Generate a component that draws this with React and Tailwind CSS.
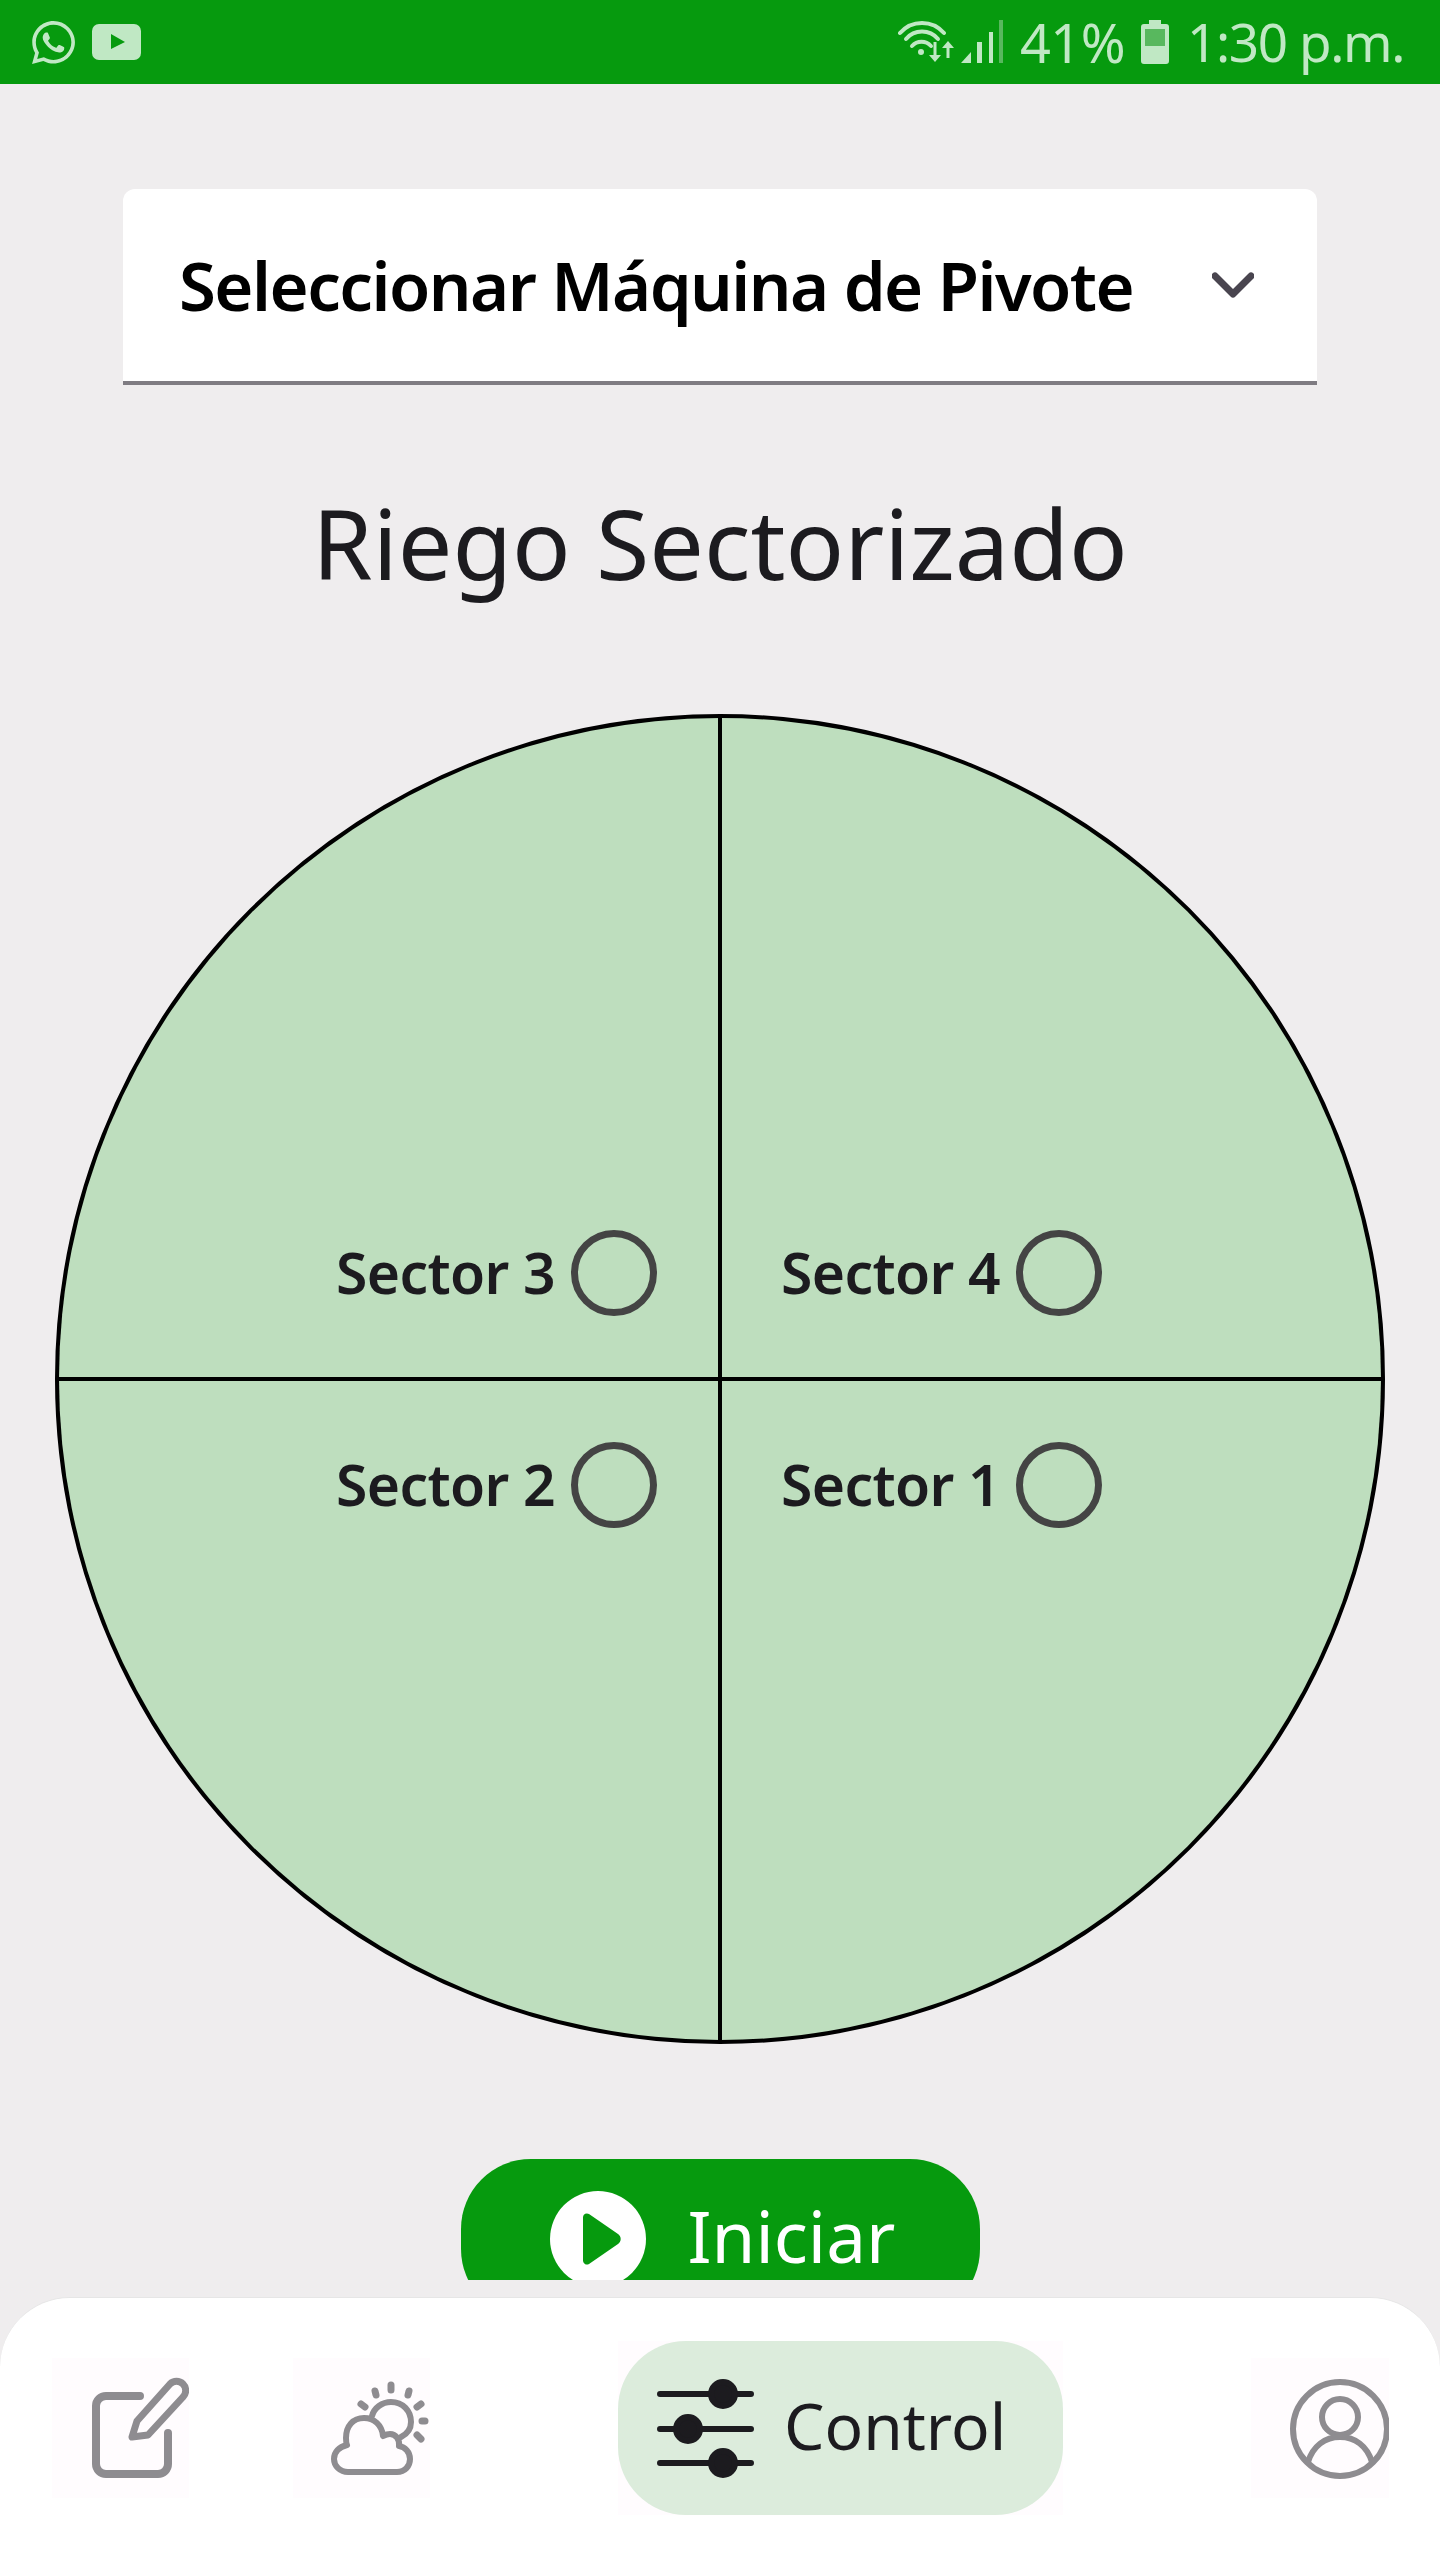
import React from "react";
import { FaWhatsapp } from "react-icons/fa";

const font = { fontFamily: '"Noto Sans", sans-serif' };

function Sector({ label, left, top }) {
  return (
    <div className={`flex bg-[#bedebe] ${left ? "justify-end pr-[61px]" : "justify-start pl-[59px]"} ${top ? "items-end pb-[60px]" : "items-start pt-[60px]"}`}>
      <div className="flex items-center">
        <span className="w-[222px] whitespace-nowrap text-[57px] leading-[86px] font-[560] tracking-[-0.6px] text-[#1c1b1f] mb-[2px]">{label}</span>
        <span className="ml-[13px] w-[86px] h-[86px] rounded-full border-[7px] border-[#444444]" />
      </div>
    </div>
  );
}

function StatusBar() {
  return (
    <div className="h-[84px] bg-[#069a0e] flex items-center justify-between pl-[29px] pr-[36px] text-[#c0e8c4]">
      <div className="flex items-center">
        <FaWhatsapp className="w-[49px] h-[49px]" />
        <svg className="ml-[14px]" width="49" height="36" viewBox="0 0 49 36">
          <rect width="49" height="36" rx="7" fill="#c0e8c4" />
          <path d="M19 10 L33 18 L19 25 Z" fill="#069a0e" />
        </svg>
      </div>
      <div className="flex items-center">
        <svg width="108" height="46" viewBox="0 0 108 46" fill="none" stroke="#c0e8c4">
          <path d="M2 14 A29 29 0 0 1 46 14" strokeWidth="4" strokeLinecap="round" />
          <path d="M8 20 A21 21 0 0 1 40 20" strokeWidth="4" strokeLinecap="round" />
          <path d="M14 27 A13 13 0 0 1 33 27" strokeWidth="4" strokeLinecap="round" />
          <circle cx="23" cy="33" r="3" fill="#c0e8c4" stroke="none" />
          <path d="M37 23 V39" strokeWidth="3" />
          <path d="M31 36 L37 43 L43 36 Z" fill="#c0e8c4" stroke="none" />
          <path d="M50 27 V39" strokeWidth="3" />
          <path d="M44 29 L50 22 L56 29 Z" fill="#c0e8c4" stroke="none" />
          <path d="M63 44 L73 33 V44 Z" fill="#c0e8c4" stroke="none" />
          <rect x="79" y="23" width="5" height="21" fill="#c0e8c4" stroke="none" />
          <rect x="91" y="13" width="4" height="31" fill="#c0e8c4" stroke="none" />
          <rect x="101" y="1" width="4" height="43" fill="#58b85e" stroke="none" />
        </svg>
        <span className="ml-[14px] text-[54px] leading-[60px] tracking-[-0.5px]">41%</span>
        <svg className="ml-[16px]" width="28" height="44" viewBox="0 0 28 44">
          <path d="M8 0 H20 V4 H25 a3 3 0 0 1 3 3 V41 a3 3 0 0 1 -3 3 H3 a3 3 0 0 1 -3 -3 V7 a3 3 0 0 1 3 -3 H8 Z" fill="#c0e8c4" />
          <rect x="4" y="9" width="20" height="17" fill="#58b85e" />
        </svg>
        <span className="ml-[18px] text-[53px] leading-[60px] tracking-[-1.4px] whitespace-nowrap">1:30 p.m.</span>
      </div>
    </div>
  );
}

export default function App() {
  return (
    <div className="w-[1440px] h-[2560px] bg-[#efedee] flex flex-col overflow-hidden" style={font}>
      <StatusBar />
      <main className="h-[2196px] overflow-hidden flex flex-col items-center">
        <div className="mt-[105px] w-[1194px] h-[196px] shrink-0 bg-white rounded-t-[12px] border-b-[4px] border-[#7f7c82] flex items-center justify-between pl-[56px] pr-[63px]">
          <span className="text-[67px] leading-[90px] font-[560] tracking-[-1.5px] text-black whitespace-nowrap">Seleccionar Máquina de Pivote</span>
          <svg width="42" height="26" viewBox="0 0 42 26" fill="none" stroke="#49454f" strokeWidth="7" strokeLinecap="round" strokeLinejoin="round">
            <path d="M3 4 L21 22 L39 4" />
          </svg>
        </div>
        <h1 className="mt-[97px] h-[120px] shrink-0 text-[97px] leading-[120px] font-normal text-[#1c1b1f] whitespace-nowrap">Riego Sectorizado</h1>
        <div className="mt-[112px] w-[1330px] h-[1330px] shrink-0 rounded-full border-[4px] border-black overflow-hidden bg-black grid grid-cols-2 grid-rows-2 gap-[4px]">
          <Sector label="Sector 3" left top />
          <Sector label="Sector 4" top />
          <Sector label="Sector 2" left />
          <Sector label="Sector 1" />
        </div>
        <button className="mt-[115px] w-[519px] h-[160px] shrink-0 rounded-[70px] bg-[#069a0e] flex items-center pl-[89px]">
          <svg width="96" height="96" viewBox="0 0 96 96">
            <circle cx="48" cy="48" r="48" fill="#fff" />
            <path d="M33 26 a4 4 0 0 1 6 -3 L68 43 a6 6 0 0 1 0 10 L39 73 a4 4 0 0 1 -6 -3 Z" fill="#069a0e" />
          </svg>
          <span className="ml-[42px] mb-[6px] text-[71px] leading-[90px] text-white whitespace-nowrap">Iniciar</span>
        </button>
      </main>
      <nav className="mt-[17px] h-[263px] pb-[2px] shrink-0 bg-white rounded-t-[70px] border-t border-[#e6e6e6] flex items-center pl-[52px]">
        <div className="w-[137px] h-[140px] bg-[#fffcfe] shrink-0">
          <svg width="137" height="140" viewBox="0 0 137 140" fill="none" stroke="#8e8c90" strokeLinecap="round" strokeLinejoin="round">
            <path d="M88 38 H54 a10 10 0 0 0 -10 10 V106 a10 10 0 0 0 10 10 H106 a10 10 0 0 0 10 -10 V75" strokeWidth="8" />
            <path d="M85 63 L118 26 a7 7 0 0 1 13 13 L96 77 L80 79 Z" strokeWidth="7" />
          </svg>
        </div>
        <div className="ml-[104px] w-[137px] h-[140px] bg-[#fffcfe] shrink-0">
          <svg width="137" height="140" viewBox="0 0 137 140" fill="none" stroke="#8e8c90" strokeWidth="6" strokeLinecap="round" strokeLinejoin="round">
            <path d="M58 114 H104 C112 114 117 108 117 101 C117 94 112 89 106 88 C107 82 103 76 97 76 C95 76 92 77 90 78 C89 67 81 60 71 60 C60 60 53 68 53 80 C53 83 53 85 54 87 C46 89 41 94 41 101 C41 108 47 114 55 114 Z" />
            <path d="M79 58 C81 50 89 44 98 44 C110 44 118 53 118 64 C118 71 114 76 108 79" />
            <path d="M82 33 L83 37 M98 27 V32 M115 37 L116 33 M68 46 L72 49 M124 49 L128 46 M129 63 H132 M124 77 L128 81" strokeWidth="7" />
          </svg>
        </div>
        <div className="ml-[188px] w-[445px] h-[174px] shrink-0 bg-[#fffcfe]">
          <div className="w-full h-full rounded-[68px] bg-[#dcecdc] flex items-center pl-[39px]">
            <svg width="97" height="100" viewBox="0 0 97 100" fill="#1c1b1f" stroke="#1c1b1f" strokeWidth="6" strokeLinecap="round">
              <path d="M3 16 H94 M3 51 H94 M3 85 H94" fill="none" />
              <circle cx="66" cy="16" r="12" />
              <circle cx="31" cy="51" r="12" />
              <circle cx="66" cy="85" r="12" />
            </svg>
            <span className="ml-[30px] mb-[4px] text-[64px] leading-[80px] text-[#1c1b1f] whitespace-nowrap">Control</span>
          </div>
        </div>
        <div className="ml-[188px] w-[138px] h-[140px] bg-[#fffcfe] shrink-0">
          <svg width="138" height="140" viewBox="0 0 138 140" fill="none" stroke="#8e8c90" strokeWidth="6" strokeLinecap="round">
            <circle cx="89" cy="71" r="47" />
            <circle cx="89" cy="59" r="18" />
            <path d="M57 104 C62 88 74 79 89 79 C104 79 116 88 121 104" />
          </svg>
        </div>
      </nav>
    </div>
  );
}
